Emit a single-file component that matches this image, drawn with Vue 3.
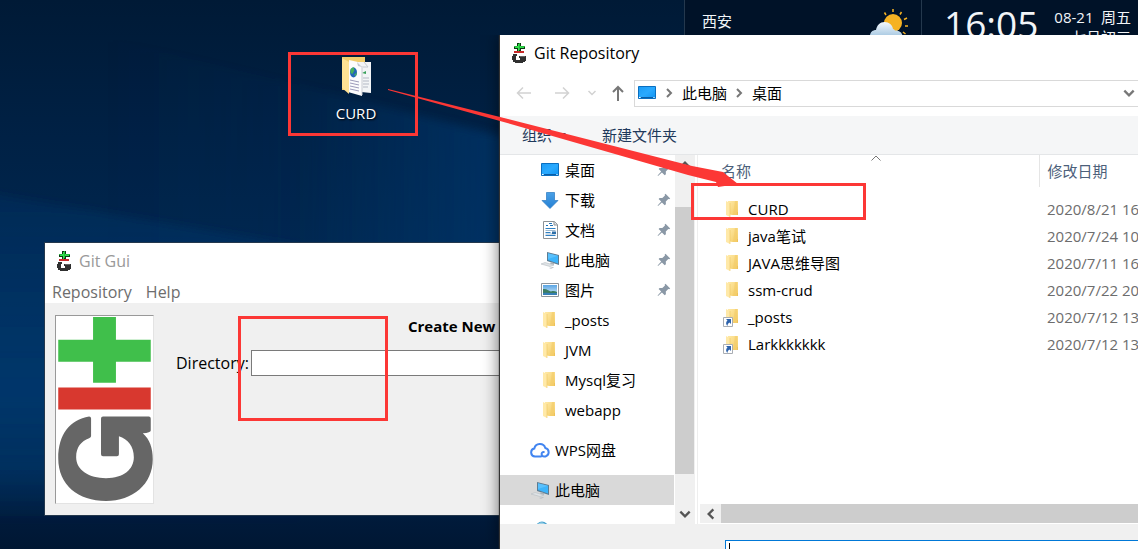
<script setup>
const quickAccess = [
  { name: '桌面', icon: 'desktop', pinned: true },
  { name: '下载', icon: 'download', pinned: true },
  { name: '文档', icon: 'document', pinned: true },
  { name: '此电脑', icon: 'computer', pinned: true },
  { name: '图片', icon: 'picture', pinned: true },
  { name: '_posts', icon: 'folder' },
  { name: 'JVM', icon: 'folder' },
  { name: 'Mysql复习', icon: 'folder' },
  { name: 'webapp', icon: 'folder' }
]

const files = [
  { name: 'CURD', date: '2020/8/21 16:02', icon: 'folder' },
  { name: 'java笔试', date: '2020/7/24 10:15', icon: 'folder' },
  { name: 'JAVA思维导图', date: '2020/7/11 16:40', icon: 'folder' },
  { name: 'ssm-crud', date: '2020/7/22 20:31', icon: 'folder' },
  { name: '_posts', date: '2020/7/12 13:20', icon: 'folder-link' },
  { name: 'Larkkkkkkk', date: '2020/7/12 13:20', icon: 'folder-link' }
]
</script>

<template>
  <div class="desktop">
    <svg class="sprites" aria-hidden="true">
      <defs>
        <linearGradient id="gFolder" x1="0" y1="0" x2="1" y2="1">
          <stop offset="0" stop-color="#ffe9a6" />
          <stop offset="1" stop-color="#f3cb62" />
        </linearGradient>
        <linearGradient id="gScreen" x1="0" y1="0" x2="1" y2="1">
          <stop offset="0" stop-color="#1b9bf5" />
          <stop offset="0.5" stop-color="#2aaaff" />
          <stop offset="1" stop-color="#0f93f2" />
        </linearGradient>
        <linearGradient id="gDown" x1="0" y1="0" x2="0" y2="1">
          <stop offset="0" stop-color="#4aa0e6" />
          <stop offset="1" stop-color="#2480d4" />
        </linearGradient>
        <linearGradient id="gCloud" x1="0" y1="0" x2="0" y2="1">
          <stop offset="0" stop-color="#f4f9fd" />
          <stop offset="1" stop-color="#a9c9e2" />
        </linearGradient>
        <linearGradient id="gSky" x1="0" y1="0" x2="0" y2="1">
          <stop offset="0" stop-color="#5aa5e4" />
          <stop offset="1" stop-color="#d6ecfa" />
        </linearGradient>
      </defs>
      <symbol id="git" viewBox="0 0 14 20">
        <g shape-rendering="crispEdges">
          <path d="M5 0h4v3h4v3H9v2H5V6H2V3h3z" fill="#0b3a12" />
          <path d="M6 1h1v7H6zM3 4h9v1H3zM5 3h4v1H5z" fill="#2fe04a" />
          <path d="M7 0h1v7H7zM2 3h3v1H2zM9 3h4v1H9z" fill="#27b83e" />
          <path d="M2 8h10v2H2z" fill="#c92a2a" />
          <path d="M1 11h4v2H4v4h4v-2H7v-2h7v5h-1v1h-2v1H3v-1H1v-2H0v-4h1z" fill="#303030" />
          <path d="M8 13h5v1H8z" fill="#666" />
        </g>
      </symbol>
      <symbol id="folder" viewBox="0 0 20 20">
        <path d="M5 2h10v14l-1 0H9l-4-1z" fill="url(#gFolder)" />
        <path d="M12 2h2v13h1v1h-5z" fill="#f2cb68" opacity=".55" />
        <path d="M3 2l4 2v14l-4-2z" fill="#ffe9a8" />
        <path d="M7 4v14" stroke="#eec660" stroke-width=".6" />
        <path d="M14 13h1v3h-1z" fill="#eec25a" />
      </symbol>
      <symbol id="folder-link" viewBox="0 0 20 20">
        <use href="#folder" />
        <path d="M.5 10.500h9v9h-9z" fill="#fff" stroke="#a9adb3" />
        <path d="M3 12h5v5l-1.500-1.500c-1.500 1-2 2-2 3.500-2-2-1.500-4.500 0-5.500z" fill="#2d62ab" />
      </symbol>
      <symbol id="desktop" viewBox="0 0 20 20">
        <path d="M1.500 3.500h17v12h-17z" fill="url(#gScreen)" stroke="#0a6fc0" />
        <path d="M4 14.500h12" stroke="#0a5da6" />
        <path d="M2 14.500h1.500M16.500 14.500h1" stroke="#fff" />
      </symbol>
      <symbol id="download" viewBox="0 0 20 20">
        <path d="M6.500 2.500h8v8h3.500l-8 8-8-8h4.500z" fill="url(#gDown)" stroke="#2a78c0" stroke-width=".7" />
      </symbol>
      <symbol id="document" viewBox="0 0 20 20">
        <path d="M3.500 1.500h11l3 3v14h-14z" fill="#fff" stroke="#8d9296" />
        <path d="M14 1.500v3.500h3.500" fill="#dde1e4" stroke="#8d9296" />
        <path d="M6 5.500h2M9 3.500h3M10 5.500h3" stroke="#1f72b8" />
        <path d="M5.500 8.500h10M5.500 12.500h5M5.500 15.500h10" stroke="#2f80c3" />
        <path d="M5.500 10.500h10M5.500 14h10" stroke="#9fb8cc" />
        <path d="M12 11.500h4v2.500h-4z" fill="#2f6fa8" />
      </symbol>
      <symbol id="computer" viewBox="0 0 20 20">
        <path d="M7 2l12 3v10L7 11z" fill="#5d7c92" />
        <path d="M8 3.200l10 2.600v7.700L8 10z" fill="#3db4fb" />
        <path d="M8 3.200l10 2.600L8 9z" fill="#6ecaff" opacity=".6" />
        <path d="M11 12l3 1v2l-4-1z" fill="#a9b2b8" />
        <path d="M1 14l4-1.500 9 2.500-4 1.500z" fill="#dfe3e6" stroke="#b7bec3" stroke-width=".6" />
        <path d="M9 18l4-1 1 .6-3 1.200z" fill="#b7bec3" />
      </symbol>
      <symbol id="picture" viewBox="0 0 20 20">
        <path d="M1.500 3.500h17v13h-17z" fill="#fff" stroke="#8e959b" />
        <path d="M3 5h14v10H3z" fill="url(#gSky)" />
        <path d="M3 9c4-.5 5 1.500 8 2.500 2-.7 4-.5 6 .5v3H3z" fill="#3c7d62" />
        <path d="M3 13c5-1 9 .5 14 0v2H3z" fill="#367fb6" />
      </symbol>
      <symbol id="pin" viewBox="0 0 14 14">
        <path d="M8.500.8l4.700 4.600-1 .9-.9-.4-2.500 2.600.1 2.700-1.200 1L4.900 9.400 1 13l-.4-.4L4.200 8.600 1.600 6l1-1.100 2.700.1L8 2.500l-.4-.8z" fill="#8a98a6" />
      </symbol>
      <symbol id="chev" viewBox="0 0 12 12">
        <path d="M2 4l4 4 4-4" fill="none" stroke="currentColor" stroke-width="2" />
      </symbol>
      <symbol id="wps" viewBox="0 0 20 16">
        <path d="M11 14.500H5a4 4 0 0 1-.7-7.900A5.700 5.700 0 0 1 15.300 6a4.400 4.400 0 0 1 .2 8.500h-1.300c-3.200 0-3.500-4.500-.4-4.500" fill="none" stroke="#4285f0" stroke-width="2" stroke-linecap="round" />
      </symbol>
      <symbol id="network" viewBox="0 0 20 20">
        <circle cx="12" cy="8" r="6.500" fill="#4aa3cf" />
        <path d="M8 4c2-2 5-2 7 0l-3 1z" fill="#9fd3e8" />
      </symbol>
    </svg>

    <svg class="wallpaper" viewBox="0 0 1138 549" preserveAspectRatio="none" aria-hidden="true">
      <defs>
        <linearGradient id="wBase" x1="0" y1="0" x2="0" y2="1">
          <stop offset="0" stop-color="#001a36" />
          <stop offset=".25" stop-color="#002145" />
          <stop offset=".6" stop-color="#002a55" />
          <stop offset=".85" stop-color="#002a55" />
          <stop offset=".95" stop-color="#001a3a" />
          <stop offset="1" stop-color="#001733" />
        </linearGradient>
        <linearGradient id="wBeam" x1="0" y1="0" x2="1" y2="0">
          <stop offset="0" stop-color="#003a72" stop-opacity="0" />
          <stop offset=".5" stop-color="#003a72" stop-opacity=".15" />
          <stop offset="1" stop-color="#003a72" stop-opacity=".9" />
        </linearGradient>
        <linearGradient id="wLow" x1="0" y1="0" x2="0" y2="1">
          <stop offset="0" stop-color="#003468" stop-opacity=".35" />
          <stop offset=".6" stop-color="#003a70" stop-opacity=".8" />
          <stop offset="1" stop-color="#003a70" stop-opacity="0" />
        </linearGradient>
        <filter id="wSoft"><feGaussianBlur stdDeviation="4" /></filter>
      </defs>
      <rect width="1138" height="549" fill="url(#wBase)" />
      <path d="M100 36L510 138V270H100z" fill="url(#wBeam)" opacity=".7" filter="url(#wSoft)" />
      <path d="M-20 192L300 246V525H-20z" fill="url(#wLow)" filter="url(#wSoft)" />
    </svg>

    <header class="gadget">
      <div class="weather">
        <span>西安</span>
        <svg class="sun" viewBox="0 0 40 28" aria-hidden="true">
          <circle cx="24" cy="15" r="9" fill="#f5b223" />
          <path d="M15.500 4.500l1.500 2.500M24 1v3M32.500 4l-1.500 2.500M38 10l-3 1.500M36 18h3M34 24l2.500 2" stroke="#f5b223" stroke-width="1.500" />
          <path d="M1 28c0-4 3-6 6-6 1-5 4-8 8.500-8s8 3 8.500 7c1 0 1.500.8 2 1.600 4-.4 7 2 7.500 5.400z" fill="url(#gCloud)" />
        </svg>
      </div>
      <div class="clock">
        <time class="time">16:05</time>
        <div class="date">
          <div>08-21&ensp;周五</div>
          <div>七月初三</div>
        </div>
      </div>
    </header>

    <a class="shortcut" href="#curd">
      <svg viewBox="0 0 32 42" aria-hidden="true">
        <path d="M2 1h23v33H2z" fill="#f1cd6c" />
        <path d="M18 6l13 0v31l-10-1z" fill="#f2f4f6" />
        <path d="M23 22h6M23 25h6M23 28h6M23 31h5" stroke="#b3b8c4" />
        <path d="M24 6l4 5h-5" fill="none" stroke="#c3c8cf" />
        <path d="M22 17l4-2v3z" fill="#38a05a" />
        <path d="M9 4l9 2 4 5v29L8 36z" fill="#fcfcfd" />
        <path d="M22 10v29" stroke="#c9ccd2" />
        <path d="M17 6l5 5-4-1z" fill="#c3c8cf" />
        <ellipse cx="13.500" cy="16.500" rx="3.500" ry="5" fill="#2266b8" />
        <path d="M10.500 13l3-2 1 3-2 4-2-1zM14 19l3-3-1 4z" fill="#46b05e" />
        <path d="M10 24l9 2M10 27l9 2M10 30l9 2M10 33l9 2" stroke="#9d9aba" />
        <path d="M2 2l7 4v32l-7-6z" fill="#ffe294" />
      </svg>
      <span>CURD</span>
    </a>

    <section class="window gitgui" aria-label="Git Gui">
      <div class="title muted">
        <svg class="git" aria-hidden="true"><use href="#git" /></svg>
        <span>Git Gui</span>
      </div>
      <nav class="menu">
        <button type="button">Repository</button>
        <button type="button">Help</button>
      </nav>
      <div class="gui-body">
        <svg class="logo" viewBox="0 0 97 188" role="img" aria-label="Git">
          <path d="M37 1h23v23h35v22H60v21H37V46H2V24h35z" fill="#40bf4b" />
          <path d="M2 72h93v22H2z" fill="#d8382f" />
          <path d="M33 101Q35 101 35 103V121Q35 122 33 123C25 126 20 132 20 142C20 155 33 163 50 163C68 163 78 154 78 142C78 131 72 124 63 121V139Q63 141 61 141H47Q45 141 45 139V103Q45 101 47 101H93Q95 101 95 103V115Q95 117 87 118C94 124 97 133 97 144C97 169 77 186 50 186C22 186 2 170 2 143C2 119 14 104 33 101Z" fill="#666" />
        </svg>
        <form class="repo-form" @submit.prevent>
          <h1>Create New</h1>
          <div class="field">
            <label for="directory">Directory:</label>
            <input id="directory" type="text" />
          </div>
        </form>
      </div>
    </section>

    <section class="window explorer" aria-label="Git Repository">
      <div class="title">
        <svg class="git" aria-hidden="true"><use href="#git" /></svg>
        <span>Git Repository</span>
      </div>

      <div class="navbar">
        <button type="button" class="faint" aria-label="后退">
          <svg viewBox="0 0 16 16"><path d="M15 8H1.500M7 2.500L1.500 8 7 13.500" /></svg>
        </button>
        <button type="button" class="faint forward" aria-label="前进">
          <svg viewBox="0 0 16 16"><path d="M1 8h13.500M9 2.500L14.500 8 9 13.500" /></svg>
        </button>
        <button type="button" class="faint recent" aria-label="最近">
          <svg viewBox="0 0 10 16"><path d="M1.500 6L5 9.500 8.500 6" /></svg>
        </button>
        <button type="button" class="up" aria-label="上移">
          <svg viewBox="0 0 16 16"><path d="M8 16V2M3 7l5-5 5 5" /></svg>
        </button>
        <div class="address">
          <svg class="icon" aria-hidden="true"><use href="#desktop" /></svg>
          <svg class="sep" aria-hidden="true"><use href="#chev" /></svg>
          <a href="#pc">此电脑</a>
          <svg class="sep" aria-hidden="true"><use href="#chev" /></svg>
          <a href="#desk">桌面</a>
          <button type="button" class="drop" aria-label="展开">
            <svg viewBox="0 0 12 12"><use href="#chev" /></svg>
          </button>
        </div>
      </div>

      <div class="toolbar">
        <button type="button">组织 <i class="tri"></i></button>
        <button type="button">新建文件夹</button>
      </div>

      <div class="panes">
        <nav class="tree">
          <ul>
            <li v-for="item in quickAccess" :key="item.name">
              <a href="#tree">
                <svg class="icon" aria-hidden="true"><use :href="'#' + item.icon" /></svg>
                <span>{{ item.name }}</span>
                <svg v-if="item.pinned" class="pin" aria-hidden="true"><use href="#pin" /></svg>
              </a>
            </li>
            <li class="root">
              <a href="#wps"><svg class="icon" aria-hidden="true"><use href="#wps" /></svg><span>WPS网盘</span></a>
            </li>
            <li class="root selected">
              <a href="#pc"><svg class="icon" aria-hidden="true"><use href="#computer" /></svg><span>此电脑</span></a>
            </li>
            <li class="root">
              <a href="#net" aria-label="网络"><svg class="icon" aria-hidden="true"><use href="#network" /></svg></a>
            </li>
          </ul>
        </nav>
        <div class="vscroll">
          <button type="button" class="flip" aria-label="向上"><svg viewBox="0 0 12 12"><use href="#chev" /></svg></button>
          <div class="vtrack"><div class="vthumb"></div></div>
          <button type="button" aria-label="向下"><svg viewBox="0 0 12 12"><use href="#chev" /></svg></button>
        </div>
        <div class="list">
          <div class="rows">
            <svg class="sort" viewBox="0 0 10 6" aria-hidden="true"><path d="M.5 5.500L5 1l4.500 4.500" /></svg>
            <table>
              <thead>
                <tr><th class="name">名称</th><th>修改日期</th></tr>
              </thead>
              <tbody>
                <tr v-for="file in files" :key="file.name">
                  <td class="name">
                    <div class="file">
                      <svg class="icon" aria-hidden="true"><use :href="'#' + file.icon" /></svg>
                      <span>{{ file.name }}</span>
                    </div>
                  </td>
                  <td>{{ file.date }}</td>
                </tr>
              </tbody>
            </table>
          </div>
          <div class="hscroll">
            <button type="button" aria-label="向左"><svg viewBox="0 0 12 12"><use href="#chev" /></svg></button>
            <div class="hthumb"></div>
          </div>
        </div>
      </div>

      <div class="footer">
        <input type="text" aria-label="文件夹" />
      </div>
    </section>

    <div class="mark mark-shortcut"></div>
    <div class="mark mark-directory"></div>
    <div class="mark mark-file"></div>
    <svg class="arrow" viewBox="0 0 350 100" aria-hidden="true">
      <path d="M0 0L112 28L304 77L335 83L350 95L330 98L328 93L300 86L112 32L0 1z" fill="#fc3735" />
    </svg>
  </div>
</template>

<style>
body {
  margin: 0;
  overflow: hidden;
}
</style>

<style scoped>
.desktop {
  position: relative;
  min-height: 100vh;
  overflow: hidden;
  background: #002145;
  color: #000;
  font: 15px/20px "Open Sans", "Noto Sans CJK SC", sans-serif;
}
.desktop * {
  box-sizing: border-box;
}
svg {
  display: block;
  flex: none;
}
button {
  display: flex;
  align-items: center;
  justify-content: center;
  padding: 0;
  border: 0;
  background: none;
  color: inherit;
  font: inherit;
}
a {
  color: inherit;
  text-decoration: none;
}
.sprites {
  position: absolute;
  width: 0;
  height: 0;
}
.wallpaper {
  position: absolute;
  inset: 0;
  width: 100%;
  height: 100%;
}
.icon {
  width: 20px;
  height: 20px;
}

.gadget {
  position: absolute;
  top: 0;
  left: 684px;
  right: 0;
  height: 60px;
  display: flex;
  background: #001228;
  color: #f2f5f8;
  border-left: 1px solid #24384d;
}
.weather {
  display: flex;
  justify-content: space-between;
  width: 237px;
  padding: 8px 12px 0 17px;
  border-right: 1px solid #24384d;
  line-height: 26px;
}
.sun {
  width: 40px;
  height: 28px;
}
.clock {
  flex: 1;
  display: flex;
  gap: 16px;
  padding-left: 22px;
  white-space: nowrap;
}
.time {
  font-size: 37px;
  line-height: 48px;
}
.date {
  padding-top: 7px;
  text-align: right;
}

.shortcut {
  position: absolute;
  left: 316px;
  top: 56px;
  width: 80px;
  display: flex;
  flex-direction: column;
  align-items: center;
  gap: 5px;
  color: #fff;
  text-shadow: 1px 1px 2px #000;
}
.shortcut svg {
  width: 32px;
  height: 42px;
}

.window {
  position: absolute;
  background: #fff;
}
.title {
  display: flex;
  align-items: center;
  gap: 8px;
  height: 38px;
  padding: 0 0 2px 12px;
  font-size: 16px;
}
.muted {
  color: #999;
}
.git {
  width: 14px;
  height: 20px;
}

.gitgui {
  left: 44px;
  top: 242px;
  width: 60%;
  border: 1px solid #24384d;
}
.menu {
  display: flex;
  gap: 14px;
  height: 22px;
  padding-left: 7px;
  color: #6d6d6d;
  font-size: 16px;
}
.gui-body {
  display: flex;
  gap: 22px;
  padding: 12px 10px 11px;
  background: #f0f0f0;
}
.logo {
  width: 99px;
  height: 189px;
  border: 1px solid #e3e3e3;
  border-top-color: #999;
  border-left-color: #999;
  background: #fff;
}
.repo-form {
  flex: 1;
  padding-top: 1px;
}
h1 {
  margin: 0 0 14px 232px;
  font-size: 15px;
  line-height: 20px;
  white-space: nowrap;
}
.field {
  display: flex;
  align-items: center;
  gap: 2px;
  font-size: 16px;
}
.field input {
  flex: 1;
  height: 26px;
  border: 1px solid #7a7a7a;
  background: #fff;
}

.explorer {
  left: 500px;
  right: 0;
  top: 35px;
  bottom: 0;
  display: flex;
  flex-direction: column;
  box-shadow: -1px 0 1px #333, 0 0 16px rgba(0, 0, 0, 0.6);
  clip-path: inset(0 0 0 -20px);
}
.navbar {
  display: flex;
  align-items: center;
  height: 43px;
  padding: 0 0 3px 16px;
}
.navbar > button svg {
  width: 16px;
  height: 16px;
  fill: none;
  stroke: currentColor;
  stroke-width: 1.5;
}
.navbar > .up {
  margin: 0 8px 0 10px;
  color: #777;
}
.navbar > .up svg {
  stroke-width: 2;
}
.faint {
  color: #d2d2d2;
}
.forward {
  margin: 0 14px 0 22px;
}
.address {
  flex: 1;
  display: flex;
  align-items: center;
  height: 27px;
  padding-left: 2px;
  border: 1px solid #d9d9d9;
  border-right: 0;
}
.address a {
  line-height: 26px;
}
.sep {
  width: 12px;
  height: 12px;
  margin: 0 7px 0 6px;
  color: #777;
  transform: rotate(-90deg);
}
.drop {
  margin: 0 2px 0 auto;
  color: #777;
}
.drop svg {
  width: 14px;
  height: 14px;
}
.toolbar {
  display: flex;
  gap: 36px;
  height: 39px;
  padding-left: 22px;
  background: #f5f6f7;
  border-bottom: 1px solid #e4e6e8;
  color: #1e395b;
}
.tri {
  margin-left: 6px;
  border: 4px solid transparent;
  border-top-color: #1e395b;
  border-bottom: 0;
}

.panes {
  flex: 1;
  display: flex;
  min-height: 0;
}
.tree {
  width: 174px;
  overflow: hidden;
}
ul {
  margin: 0;
  padding: 0;
  list-style: none;
}
.tree a {
  display: flex;
  align-items: center;
  gap: 5px;
  height: 30px;
  padding: 0 3px 0 40px;
}
.tree .root {
  margin-top: 10px;
}
.tree .root a {
  padding-left: 30px;
}
.tree .selected {
  background: #d9d9d9;
}
.pin {
  width: 14px;
  height: 14px;
  margin-left: auto;
}
.vscroll {
  display: flex;
  flex-direction: column;
  width: 20px;
  margin-left: 1px;
  background: #f0f0f0;
  color: #555;
}
.vscroll button {
  height: 20px;
}
.vscroll button svg,
.hscroll button svg {
  width: 14px;
  height: 14px;
}
.flip svg {
  transform: rotate(180deg);
}
.vtrack {
  flex: 1;
  padding: 32px 1px 0 0;
}
.vthumb {
  height: 90%;
  background: #cdcdcd;
}
.list {
  flex: 1;
  display: flex;
  flex-direction: column;
  min-width: 0;
  margin-left: 2px;
  border-left: 1px solid #eee;
}
.rows {
  position: relative;
  flex: 1;
  overflow: hidden;
}
.sort {
  position: absolute;
  left: 173px;
  top: 0;
  width: 10px;
  height: 6px;
  fill: none;
  stroke: #777;
}
table {
  width: 540px;
  table-layout: fixed;
  border-collapse: collapse;
}
th,
td {
  height: 27px;
  padding: 0 0 0 8px;
  color: #6d6d6d;
  font-weight: 400;
  text-align: left;
  white-space: nowrap;
}
th {
  height: 32px;
  color: #4c607a;
  border-left: 1px solid #e5e5e5;
}
.name {
  width: 341px;
  padding-left: 25px;
  border-left: 0;
  color: #000;
}
th.name {
  padding-left: 23px;
  color: #4c607a;
}
tbody::before {
  content: "";
  display: block;
  height: 8px;
}
.file {
  display: flex;
  align-items: center;
  gap: 5px;
}
.hscroll {
  display: flex;
  height: 20px;
  padding: 0 0 1px 2px;
  color: #555;
}
.hscroll button {
  width: 21px;
  background: #f0f0f0;
}
.hscroll button svg {
  transform: rotate(90deg);
}
.hthumb {
  flex: 1;
  background: #cdcdcd;
}
.footer {
  height: 25px;
  padding: 16px 0 0 225px;
  background: #f0f0f0;
  overflow: hidden;
}
.footer input {
  display: block;
  width: 100%;
  height: 26px;
  padding: 0 4px;
  border: 1px solid #0078d7;
  border-right: 0;
  background: linear-gradient(#000, #000) 3px 2px / 1px 20px no-repeat #fff;
  font: inherit;
}

.mark {
  position: absolute;
  border: 3px solid #fc3735;
}
.mark-shortcut {
  left: 288px;
  top: 52px;
  width: 130px;
  height: 84px;
}
.mark-directory {
  left: 238px;
  top: 316px;
  width: 150px;
  height: 105px;
}
.mark-file {
  left: 691px;
  top: 183px;
  width: 175px;
  height: 37px;
}
.arrow {
  position: absolute;
  left: 388px;
  top: 89px;
  width: 350px;
  height: 100px;
}
</style>
